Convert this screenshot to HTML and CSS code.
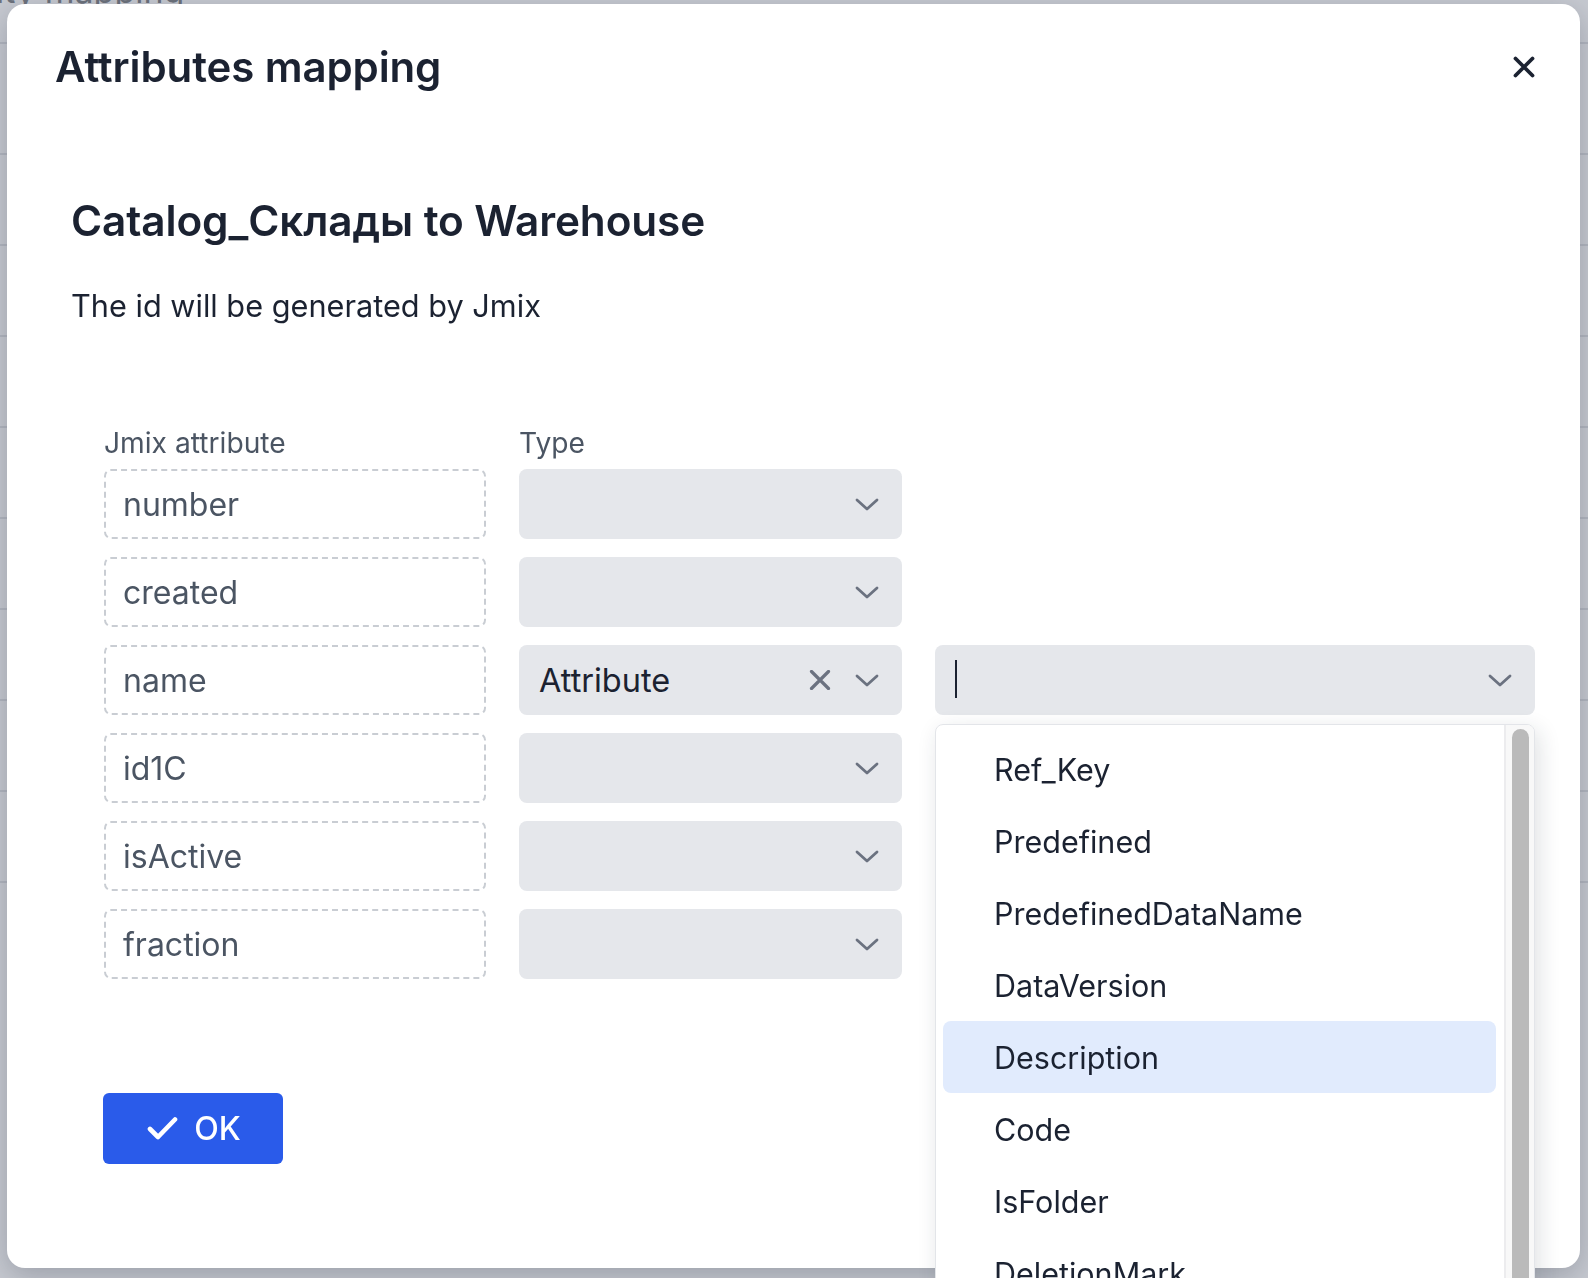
FILE: index.html
```html
<!DOCTYPE html>
<html lang="en">
<head>
<meta charset="utf-8">
<title>Attributes mapping</title>
<link rel="stylesheet" href="styles.css">
</head>
<body>
<div class="under-page">
  <div class="under-title">ity mapping</div>
  <div class="under-row r1"></div>
  <div class="under-row r2"></div>
  <div class="under-row r3"></div>
  <div class="under-row r3"></div>
  <div class="under-row r3"></div>
  <div class="under-row r3"></div>
  <div class="under-row r3"></div>
  <div class="under-row r3"></div>
  <div class="under-row r3"></div>
  <div class="under-row r3"></div>
</div>

<div class="modal">
  <div class="modal-header">
    <h1 class="modal-title">Attributes mapping</h1>
    <button class="close-btn" aria-label="Close">
      <svg width="22" height="22" viewBox="0 0 22 22"><path d="M2.5 2.5 L19.5 19.5 M19.5 2.5 L2.5 19.5" stroke="#1b2231" stroke-width="3.8" stroke-linecap="round" fill="none"/></svg>
    </button>
  </div>

  <div class="modal-body">
    <h2 class="mapping-title">Catalog_Склады to Warehouse</h2>
    <p class="mapping-note">The id will be generated by Jmix</p>

    <div class="grid">
      <div class="col-label">Jmix attribute</div>
      <div class="col-label">Type</div>
      <div></div>

      <div class="field">number</div>
      <div class="select"><span class="select-value"></span><svg class="chev" width="24" height="13" viewBox="0 0 24 13"><path d="M2 2 L12 11 L22 2" stroke="#6b7280" stroke-width="2.8" stroke-linecap="round" stroke-linejoin="round" fill="none"/></svg></div>
      <div></div>

      <div class="field">created</div>
      <div class="select"><span class="select-value"></span><svg class="chev" width="24" height="13" viewBox="0 0 24 13"><path d="M2 2 L12 11 L22 2" stroke="#6b7280" stroke-width="2.8" stroke-linecap="round" stroke-linejoin="round" fill="none"/></svg></div>
      <div></div>

      <div class="field">name</div>
      <div class="select"><span class="select-value filled">Attribute</span><svg class="clear" width="22" height="20" viewBox="0 0 22 20"><path d="M2.5 1.5 L19.5 18.5 M19.5 1.5 L2.5 18.5" stroke="#6b7280" stroke-width="3.2" stroke-linecap="round" fill="none"/></svg><svg class="chev" width="24" height="13" viewBox="0 0 24 13"><path d="M2 2 L12 11 L22 2" stroke="#6b7280" stroke-width="2.8" stroke-linecap="round" stroke-linejoin="round" fill="none"/></svg></div>
      <div class="select wide">
        <span class="caret"></span>
        <svg class="chev" width="24" height="13" viewBox="0 0 24 13"><path d="M2 2 L12 11 L22 2" stroke="#6b7280" stroke-width="2.8" stroke-linecap="round" stroke-linejoin="round" fill="none"/></svg>
        <div class="dropdown">
          <ul class="options">
            <li>Ref_Key</li>
            <li>Predefined</li>
            <li>PredefinedDataName</li>
            <li>DataVersion</li>
            <li class="active">Description</li>
            <li>Code</li>
            <li>IsFolder</li>
            <li>DeletionMark</li>
            <li>Parent_Key</li>
          </ul>
          <div class="scrollbar"><div class="thumb"></div></div>
        </div>
      </div>

      <div class="field">id1C</div>
      <div class="select"><span class="select-value"></span><svg class="chev" width="24" height="13" viewBox="0 0 24 13"><path d="M2 2 L12 11 L22 2" stroke="#6b7280" stroke-width="2.8" stroke-linecap="round" stroke-linejoin="round" fill="none"/></svg></div>
      <div></div>

      <div class="field">isActive</div>
      <div class="select"><span class="select-value"></span><svg class="chev" width="24" height="13" viewBox="0 0 24 13"><path d="M2 2 L12 11 L22 2" stroke="#6b7280" stroke-width="2.8" stroke-linecap="round" stroke-linejoin="round" fill="none"/></svg></div>
      <div></div>

      <div class="field">fraction</div>
      <div class="select"><span class="select-value"></span><svg class="chev" width="24" height="13" viewBox="0 0 24 13"><path d="M2 2 L12 11 L22 2" stroke="#6b7280" stroke-width="2.8" stroke-linecap="round" stroke-linejoin="round" fill="none"/></svg></div>
      <div></div>
    </div>

    <div class="actions">
      <button class="ok-btn">
        <svg width="31" height="25" viewBox="0 0 31 25"><path d="M3 13 L11 21 L28 3.5" stroke="#ffffff" stroke-width="4.6" stroke-linecap="round" stroke-linejoin="round" fill="none"/></svg>
        <span>OK</span>
      </button>
    </div>
  </div>
</div>
</body>
</html>
```

FILE: styles.css
```css
* { box-sizing: border-box; }

html, body {
  margin: 0;
  padding: 0;
  height: 100%;
  overflow: hidden;
}

body {
  background: #c7cad1;
  font-family: Inter, "Noto Sans", "Noto Sans CJK SC", sans-serif;
  color: #1b2231;
}

/* the page beneath the dialog overlay */
.under-page {
  height: 100%;
  overflow: hidden;
}

.under-title {
  margin-top: -26px;
  margin-left: -4px;
  font-size: 34px;
  line-height: 34px;
  color: #6d727c;
}

.under-row {
  border-bottom: 2px solid #b3b7c0;
}
.r1 { height: 36px; }
.r2 { height: 111px; }
.r3 { height: 91px; }

/* dialog */
.modal {
  position: fixed;
  left: 7px;
  top: 4px;
  width: 1573px;
  height: 1264px;
  background: #ffffff;
  border-radius: 18px;
  box-shadow: 0 8px 30px rgba(40, 48, 64, 0.28);
}

.modal-header {
  display: flex;
  justify-content: space-between;
  align-items: flex-start;
  padding: 38px 43px 0 48px;
  height: 126px;
}

.modal-title {
  margin: 0;
  font-size: 42px;
  line-height: 50px;
  font-weight: 600;
  color: #1b2231;
  letter-spacing: -0.1px;
}

.close-btn {
  margin-top: 12px;
  width: 26px;
  height: 26px;
  padding: 0;
  border: 0;
  background: transparent;
  display: flex;
  align-items: center;
  justify-content: center;
}

.modal-body {
  padding: 66px 0 0 64px;
}

.mapping-title {
  margin: 0;
  font-size: 42.3px;
  line-height: 50px;
  font-weight: 600;
  color: #1b2231;
  letter-spacing: -0.1px;
}

.mapping-note {
  margin: 40px 0 0 0;
  font-size: 30.7px;
  line-height: 40px;
  font-weight: 400;
  color: #1b2231;
}

.grid {
  margin: 95px 0 0 33px;
  display: grid;
  grid-template-columns: 382px 383px 600px;
  column-gap: 33px;
  row-gap: 18px;
  grid-template-rows: 30px repeat(6, 70px);
}

.col-label {
  font-size: 28.2px;
  line-height: 30px;
  color: #4b5563;
  align-self: end;
  padding-left: 0;
  margin-bottom: -7px;
}

.field {
  border: 2px dashed #c9cdd3;
  border-radius: 7px;
  padding: 0 17px;
  display: flex;
  align-items: center;
  font-size: 32px;
  color: #4b5563;
}

.select {
  position: relative;
  background: #e5e7eb;
  border-radius: 8px;
  display: flex;
  align-items: center;
  padding: 0 23px 0 20px;
  gap: 26px;
}

.select-value {
  flex: 1;
  font-size: 32.5px;
  color: #1b2231;
}

.clear {
  margin-right: -2px;
}

.caret {
  flex: 1;
  height: 38px;
  border-left: 2px solid #1b2231;
  margin-top: -2px;
}

.dropdown {
  position: absolute;
  left: 0;
  top: 79px;
  width: 600px;
  height: 600px;
  background: #ffffff;
  border: 1px solid #e3e5e9;
  border-radius: 8px;
  box-shadow: 4px 6px 22px rgba(30, 40, 60, 0.14);
  display: flex;
  overflow: hidden;
}

.options {
  list-style: none;
  margin: 0;
  padding: 8px 8px 0 7px;
  flex: 1;
  border-right: 2px solid #ececee;
}

.options li {
  height: 72px;
  display: flex;
  align-items: center;
  padding-left: 51px;
  font-size: 30.5px;
  color: #1b2231;
  border-radius: 8px;
}

.options li.active {
  background: #e1ebfd;
}

.scrollbar {
  width: 28px;
  background: #f8f8f8;
  padding: 4px 5px 0 6px;
}

.thumb {
  height: 100%;
  background: #bababa;
  border-radius: 9px 9px 0 0;
}

.actions {
  margin: 114px 0 0 32px;
}

.ok-btn {
  width: 180px;
  height: 71px;
  background: #2a5bea;
  border: 0;
  border-radius: 6px;
  display: flex;
  align-items: center;
  justify-content: center;
  gap: 16px;
  padding: 0 0 0 2px;
  color: #ffffff;
  font-family: Inter, "Noto Sans", sans-serif;
  font-size: 32px;
  font-weight: 500;
}
```
